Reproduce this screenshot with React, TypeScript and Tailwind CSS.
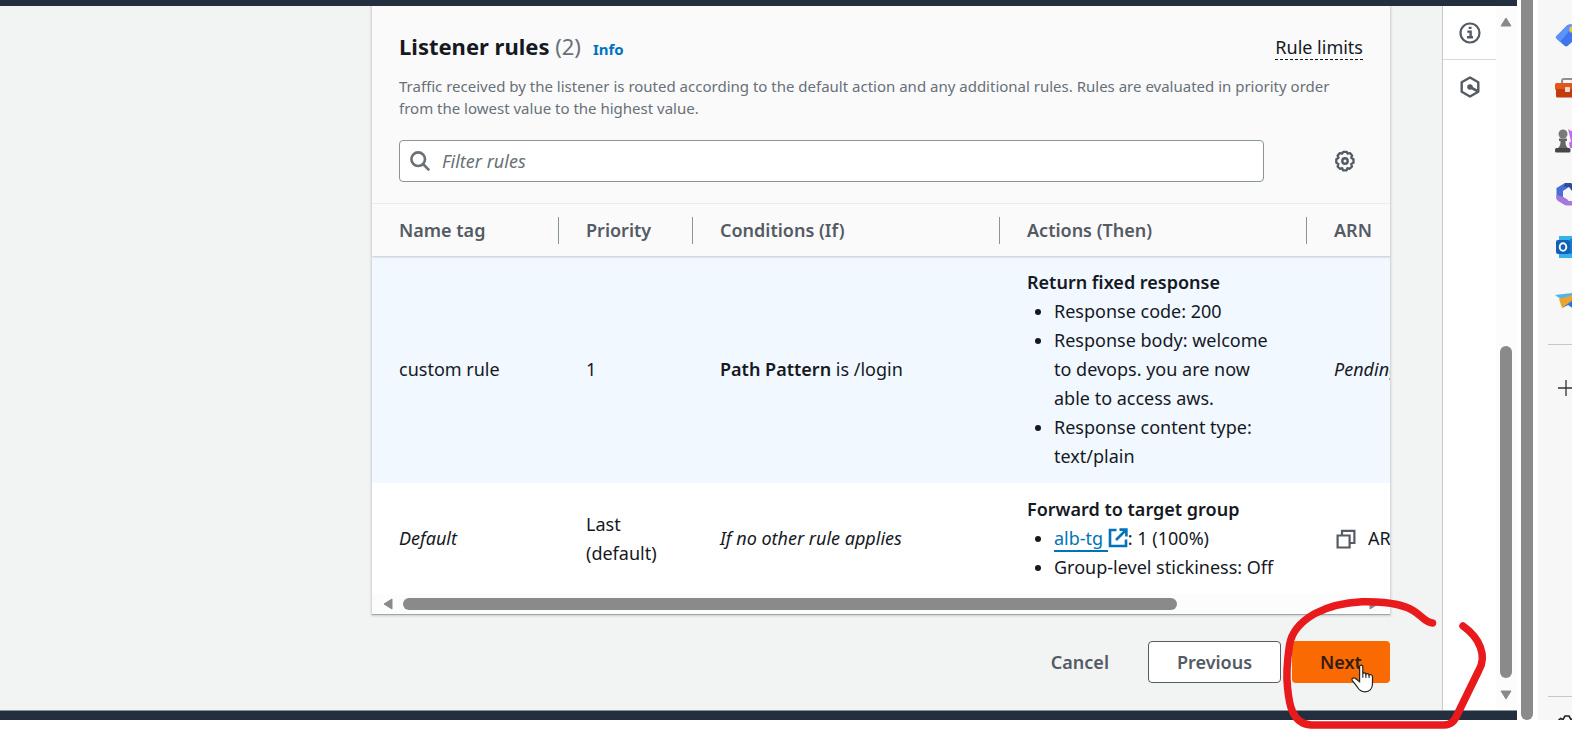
import type { ReactNode } from 'react';

function SearchIcon() {
  return (
    <svg viewBox="0 0 20 20" className="size-5 shrink-0" fill="none" stroke="#687078" strokeWidth="2.6" aria-hidden="true">
      <circle cx="8.2" cy="8.2" r="6.8" />
      <path d="M13 13l6.2 6.2" />
    </svg>
  );
}

function GearIcon() {
  return (
    <svg viewBox="0 0 22 22" className="size-[22px]" fill="none" stroke="#545b64" aria-hidden="true">
      <path
        strokeWidth="2.3"
        strokeLinejoin="round"
        d="M9.2 1.8h3.6l.7 1.8 2.5-.5 2.1 2.4-.9 2.2 2.3 1.5v3.6l-2.3 1.2.8 2.5-2.3 2.3-2.3-.6-.8 2.2H9.2l-1-2.2-2.3.6-2.3-2.3.8-2.5-2.1-1.2V9.2l2.2-1.5-.9-2.2 2.2-2.4 2.5.5z"
      />
      <circle cx="11" cy="11" r="2.7" strokeWidth="2.4" />
    </svg>
  );
}

function ExternalIcon() {
  return (
    <svg viewBox="0 0 20 20" className="inline size-5 align-[-3px]" fill="none" stroke="#0073bb" strokeWidth="2.6" aria-hidden="true">
      <path d="M8.5 2H2v16h16v-6.500M11.500 1.600H18.400V8.500M18 2L8 12" />
    </svg>
  );
}

function CopyIcon() {
  return (
    <svg viewBox="0 0 20 20" className="size-5 shrink-0" fill="none" stroke="#545b64" strokeWidth="2.2" aria-hidden="true">
      <path d="M1.600 6.500h12v12h-12zM6 6V1.800h12.400V14H14" />
    </svg>
  );
}

function InfoIcon() {
  return (
    <svg viewBox="0 0 22 22" className="size-[22px]" fill="none" stroke="#545b64" aria-hidden="true">
      <circle cx="11" cy="11" r="9.500" strokeWidth="2.200" />
      <path strokeWidth="2.400" d="M9.700 5.900h2.800M8.300 9.600h3.300v5.600M8 15.200h6" />
    </svg>
  );
}

function HexIcon() {
  return (
    <svg viewBox="0 0 22 22" className="size-[22px]" fill="none" stroke="#545b64" aria-hidden="true">
      <path strokeWidth="2.400" strokeLinejoin="round" d="M11 1.500l8.300 4.700v9.600L11 20.500l-8.300-4.700V6.200z" />
      <circle cx="11" cy="11" r="2.800" fill="#545b64" stroke="none" />
      <path strokeWidth="2.600" d="M11 11l7.500 4.200" />
    </svg>
  );
}

function HandCursor() {
  return (
    <svg viewBox="0 0 24 30" className="pointer-events-none absolute left-[59px] top-[23px] z-20 h-[30px] w-6" aria-hidden="true">
      <path
        d="M8.600 2.600C8.600.600 11.600.600 11.800 2.600V9.800C12.400 8.400 14.600 8.700 14.900 10.300 15.700 9.100 17.800 9.500 18.100 11.100 19.300 10.100 21.300 10.700 21.500 12.600V19.500C21.500 25 18.500 27.800 14 27.800 10 27.800 8 26.200 6.200 22.800L1.400 16.600C.200 14.800 2.200 13 4.200 14.200L8.600 17.800z"
        fill="#fff"
        stroke="#222"
        strokeWidth="1.200"
      />
      <path d="M11.800 9.800v4M14.900 10.300V14M18.100 11.100v3" stroke="#222" strokeWidth="1.100" fill="none" />
    </svg>
  );
}

function PenMark() {
  return (
    <svg viewBox="0 0 210 134" className="pointer-events-none absolute -left-3 -top-[45px] z-10 h-[134px] w-[210px]" aria-hidden="true">
      <path
        d="M152.500 27C141 26 142 14 117 8.500C105 5.500 93 5.500 82 5.700C65 6.500 48 10.500 35 17.500C20 26 11.500 36 9.500 49C7 66 6 78 7.500 91C9 108 12 128 31 129H164C172 129 175 124 178 117L199 74C207 60 200 42 183 30"
        fill="none"
        stroke="#e81a1c"
        strokeWidth="7.500"
        strokeLinecap="round"
        strokeLinejoin="round"
      />
    </svg>
  );
}

const appIcons: { label: string; art: ReactNode }[] = [
  {
    label: 'Shopping',
    art: (
      <>
        <path d="M1 13.500L12 2.500Q13 1.500 15 1.500H24V13L12.500 23Q11 24 9.500 22.800L1.500 15.500Q.500 14.500 1 13.500z" fill="#3f74ee" />
        <path d="M1 13.500L12 2.500Q13 1.500 15 1.500H20L5 19L1.500 15.500Q.500 14.500 1 13.500z" fill="#5b93f8" />
        <circle cx="17.500" cy="6.500" r="3.200" fill="#f6c445" />
      </>
    ),
  },
  {
    label: 'Tools',
    art: (
      <>
        <path d="M7 7V5Q7 3 9 3H16Q18 3 18 5V7" fill="none" stroke="#8d9093" strokeWidth="2" />
        <rect x="0" y="7" width="25" height="7" rx="1.500" fill="#e2571b" />
        <path d="M1 13h24v8.500H2.500Q1 21.500 1 20z" fill="#c43a0d" />
        <rect x="10" y="11" width="5" height="5" rx="1" fill="#e8dcd4" />
      </>
    ),
  },
  {
    label: 'Games',
    art: (
      <>
        <path d="M13 0l3 2 8-2v19H15l-1-5 2-2z" fill="#c06bf0" />
        <circle cx="8" cy="5" r="4.500" fill="#77797b" />
        <path d="M4 9.500h8v2.500h-1.500c0 4 .500 5.500 3.500 8h-12c3-2.500 3.500-4 3.500-8H4z" fill="#636567" />
        <rect x="0" y="19" width="15.500" height="4.500" rx="1.500" fill="#444648" />
      </>
    ),
  },
  {
    label: 'Microsoft 365',
    art: (
      <>
        <path d="M10 1L1.500 6v11L10 23l3-5-5-3V9l6-4z" fill="#4a6fd4" />
        <path d="M10 1h6l8 5v6l-7-3-3-4H9z" fill="#2a4d9c" />
        <path d="M1.500 13L8 15l6 4h10l-7 4.500h-6L3 19q-1.500-1-1.500-3z" fill="#a678dc" />
        <circle cx="12" cy="12" r="4" fill="#f7f7f7" />
      </>
    ),
  },
  {
    label: 'Outlook',
    art: (
      <>
        <path d="M4 1h21v22H4z" fill="#35b1ec" />
        <path d="M15 4h10v15H15z" fill="#1a78cc" />
        <rect x="1" y="5" width="14" height="14" rx="2" fill="#0f62b5" />
        <ellipse cx="8" cy="12" rx="3.300" ry="3.800" fill="none" stroke="#fff" strokeWidth="1.900" />
      </>
    ),
  },
  {
    label: 'Drop',
    art: (
      <>
        <path d="M0 7L25 4v8L7 12z" fill="#52b4ea" />
        <path d="M4 11L25 5v6L7 20z" fill="#eba52f" />
        <path d="M7 20L25 7v8l-7 5.500-5-3.500z" fill="#2877e2" />
      </>
    ),
  },
];

function HeadCell({ children, last = false }: { children: ReactNode; last?: boolean }) {
  return (
    <th scope="col" className="h-[52px] p-0 text-left align-middle font-semibold text-[#545b64]">
      <div className={last ? 'pl-[27px] leading-[27px]' : 'border-r border-[#879596] pl-[27px] leading-[27px]'}>{children}</div>
    </th>
  );
}

function RulesTable() {
  return (
    <table className="w-[1275px] table-fixed border-collapse text-lg leading-[29px] text-[#16191f]">
      <colgroup>
        <col className="w-[187px]" />
        <col className="w-[134px]" />
        <col className="w-[307px]" />
        <col className="w-[307px]" />
        <col />
      </colgroup>
      <thead className="relative z-10 bg-[#fafafa] shadow-[0_1px_2px_#c3c8cb]">
        <tr>
          <HeadCell>Name tag</HeadCell>
          <HeadCell>Priority</HeadCell>
          <HeadCell>Conditions (If)</HeadCell>
          <HeadCell>Actions (Then)</HeadCell>
          <HeadCell last>ARN</HeadCell>
        </tr>
      </thead>
      <tbody>
        <tr className="bg-[#f1f8ff]">
          <td className="px-[27px] py-3">custom rule</td>
          <td className="px-[27px] py-3">1</td>
          <td className="px-[27px] py-3">
            <b className="font-semibold">Path Pattern</b> is /login
          </td>
          <td className="py-3 pl-[27px] pr-6">
            <b className="font-semibold">Return fixed response</b>
            <ul className="list-disc pl-[27px]">
              <li>Response code: 200</li>
              <li>Response body: welcome to devops. you are now able to access aws.</li>
              <li>Response content type: text/plain</li>
            </ul>
          </td>
          <td className="px-[27px] py-3 italic">Pending</td>
        </tr>
        <tr className="bg-white">
          <td className="px-[27px] py-3 italic">Default</td>
          <td className="px-[27px] py-3">Last (default)</td>
          <td className="px-[27px] py-3 italic">If no other rule applies</td>
          <td className="py-3 pl-[27px] pr-6">
            <b className="font-semibold">Forward to target group</b>
            <ul className="list-disc pl-[27px]">
              <li>
                <a href="#alb-tg" className="text-[#0073bb]">
                  <span className="whitespace-pre border-b-2 border-[#0073bb]">alb-tg </span>
                  <ExternalIcon />
                </a>
                : 1 (100%)
              </li>
              <li className="whitespace-nowrap">Group-level stickiness: Off</li>
            </ul>
          </td>
          <td className="px-[27px] py-3">
            <button type="button" className="flex items-center gap-3 pl-0.5">
              <CopyIcon />
              ARN
            </button>
          </td>
        </tr>
      </tbody>
    </table>
  );
}

function ListenerRules() {
  return (
    <section className="overflow-hidden border-b border-[#a2a6a8] bg-[#fafafa] shadow-[0_0_2px_1px_#c9cdd0]">
      <div className="px-[27px] pb-[21px] pt-[25px]">
        <div className="flex items-center justify-between">
          <div className="flex items-baseline gap-2 leading-[30px]">
            <h2 className="text-[22px] font-bold text-[#16191f]">
              Listener rules <span className="font-normal text-[#687078]">(2)</span>
            </h2>
            <a href="#info" className="ml-1 text-[15px] font-bold text-[#0073bb]">
              Info
            </a>
          </div>
          <button type="button" className="border-b border-dashed border-[#16191f] text-lg leading-[23px] text-[#16191f]">
            Rule limits
          </button>
        </div>
        <p className="mt-[11px] text-[15px] leading-[22px] text-[#687078]">
          Traffic received by the listener is routed according to the default action and any additional rules. Rules are
          evaluated in priority order from the lowest value to the highest value.
        </p>
        <div className="mt-[21px] flex items-center">
          <label className="flex h-[42px] flex-1 items-center gap-3 rounded-sm border border-[#879596] bg-white px-2.5">
            <SearchIcon />
            <input
              type="text"
              aria-label="Filter rules"
              placeholder="Filter rules"
              className="w-full bg-transparent text-lg text-[#16191f] outline-none placeholder:italic placeholder:text-[#687078]"
            />
          </label>
          <button type="button" aria-label="Preferences" className="ml-[70px] mr-[7px]">
            <GearIcon />
          </button>
        </div>
      </div>
      <div className="overflow-hidden border-t border-[#eaeded]">
        <RulesTable />
      </div>
      <div className="flex h-5 items-center bg-[#fcfcfc] px-[11px]">
        <svg viewBox="0 0 10 12" className="h-3 w-2.5 shrink-0" aria-hidden="true">
          <path d="M9 1v10L1 6z" fill="#8a8a8a" stroke="#8a8a8a" strokeLinejoin="round" />
        </svg>
        <div className="mx-2.5 flex-1">
          <div className="h-3 w-[81%] rounded-full bg-[#8a8a8a]" />
        </div>
        <svg viewBox="0 0 10 12" className="h-3 w-2.5 shrink-0" aria-hidden="true">
          <path d="M1 1v10l8-5z" fill="#8a8a8a" stroke="#8a8a8a" strokeLinejoin="round" />
        </svg>
      </div>
    </section>
  );
}

function ToolPanel() {
  return (
    <aside className="flex w-[54px] flex-col items-stretch border-l border-[#c4c8ca] bg-white">
      <button type="button" aria-label="Info" className="flex h-[54px] items-center justify-center border-b border-[#d5dbdb]">
        <InfoIcon />
      </button>
      <button type="button" aria-label="Tutorials" className="flex h-[54px] items-center justify-center">
        <HexIcon />
      </button>
    </aside>
  );
}

function PageScrollbar() {
  return (
    <div className="flex w-[21px] flex-col items-start bg-[#fcfcfc] pb-2.5 pl-1 pt-[11px]">
      <svg viewBox="0 0 12 10" className="h-2.5 w-3 shrink-0" aria-hidden="true">
        <path d="M1 9h10L6 1z" fill="#8a8a8a" stroke="#8a8a8a" strokeLinejoin="round" />
      </svg>
      <div className="flex w-3 flex-1 flex-col justify-end pb-3">
        <div className="h-[51%] rounded-full bg-[#8a8a8a]" />
      </div>
      <svg viewBox="0 0 12 10" className="h-2.5 w-3 shrink-0" aria-hidden="true">
        <path d="M1 1h10L6 9z" fill="#8a8a8a" stroke="#8a8a8a" strokeLinejoin="round" />
      </svg>
    </div>
  );
}

function BrowserSidebar() {
  return (
    <nav aria-label="Browser sidebar" className="flex w-[34px] flex-col overflow-hidden bg-[#f7f7f7] pl-2.5">
      <div className="flex w-12 flex-col gap-[29px] pl-[7px] pt-[23px]">
        {appIcons.map((icon) => (
          <button key={icon.label} type="button" aria-label={icon.label} className="size-6">
            <svg viewBox="0 0 24 24" className="size-6" aria-hidden="true">
              {icon.art}
            </svg>
          </button>
        ))}
      </div>
      <div className="mt-8 w-12 border-t border-[#c8c8c8]" />
      <button type="button" aria-label="Customize" className="ml-2.5 mt-[35px] size-4">
        <svg viewBox="0 0 16 16" className="size-4" fill="none" stroke="#333" strokeWidth="1.300" aria-hidden="true">
          <path d="M8 0v16M0 8h16" />
        </svg>
      </button>
      <div className="mt-auto h-6 w-12 overflow-hidden border-t border-[#c8c8c8] pl-[9px] pt-[18px]">
        <svg viewBox="0 0 20 20" className="size-5" fill="none" stroke="#222" strokeWidth="1.600" aria-hidden="true">
          <path d="M1 6l2.500-2.500L6 4.500 8 1h4l2 3.500 2.500-1L19 6l-1 4 1 4-2.500 2.500-2.500-1L12 19H8l-2-3.500-2.500 1L1 14l1-4z" />
        </svg>
      </div>
    </nav>
  );
}

export default function App() {
  return (
    <div className="flex h-screen overflow-hidden bg-white pb-2.5 font-['Noto_Sans','Open_Sans',sans-serif]">
      <div className="flex min-w-0 flex-1 flex-col">
        <div className="relative z-10 h-1.5 shrink-0 bg-[#232f3e]" />
        <div className="flex min-h-0 flex-1">
          <main className="min-w-0 flex-1 bg-[#f2f3f3] pl-[372px] pr-[52px]">
            <ListenerRules />
            <div className="mt-[26px] flex items-center justify-end text-lg font-semibold text-[#545b64]">
              <button type="button" className="h-[42px] px-[39px]">
                Cancel
              </button>
              <button type="button" className="h-[42px] w-[133px] rounded-sm border border-[#545b64] bg-white">
                Previous
              </button>
              <div className="relative ml-[11px]">
                <button type="button" className="h-[42px] w-[98px] rounded-sm bg-[#f96a02] text-[#331d10]">
                  Next
                </button>
                <PenMark />
                <HandCursor />
              </div>
            </div>
          </main>
          <ToolPanel />
          <PageScrollbar />
        </div>
        <div className="h-2.5 shrink-0 border-t border-[#8a929b] bg-[#232f3e]" />
      </div>
      <div className="ml-1 mr-[5px] w-3 rounded-b-full bg-[#8a8a8a]" />
      <BrowserSidebar />
    </div>
  );
}
